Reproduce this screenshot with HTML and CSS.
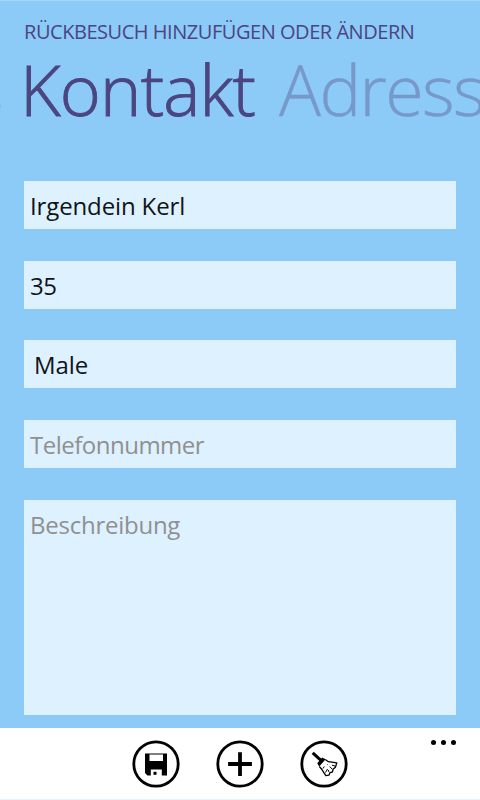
FILE: index.html
```html
<!DOCTYPE html>
<html lang="de">
<head>
<meta charset="utf-8">
<title>Rückbesuch</title>
<link rel="stylesheet" href="styles.css">
</head>
<body>
<main class="page">
  <h1 class="title">RÜCKBESUCH HINZUFÜGEN ODER ÄNDERN</h1>
  <nav class="pivot">
    <span class="previous">s</span>
    <span class="tab active">Kontakt</span>
    <span class="tab next">Adress</span>
  </nav>
  <form class="fields">
    <div class="field name">Irgendein Kerl</div>
    <div class="field age">35</div>
    <div class="field gender">Male</div>
    <div class="field hint phone">Telefonnummer</div>
    <div class="field hint notes">Beschreibung</div>
  </form>
</main>
<footer class="appbar">
  <div class="actions">
    <svg class="icon" viewBox="0 0 48 48"><circle class="ring" cx="24" cy="24" r="22.2"/><path fill-rule="evenodd" d="M13 13.5H35V35.5H15.5L13 33ZM17.5 14.5V21H31V14.5ZM18.8 29.5V35.5H29.8V29.5Z"/><path d="M21.5 31.8h3v3h-3z"/></svg>
    <svg class="icon" viewBox="0 0 48 48"><circle class="ring" cx="24" cy="24" r="22.2"/><path d="M22.1 12.2h3.8v9.9h10v3.8h-10v10h-3.8v-10h-10v-3.8h10z"/></svg>
    <svg class="icon" viewBox="0 0 48 48"><circle class="ring" cx="24" cy="24" r="22.2"/><path class="handle" d="M12.7 12.8l8 7.4"/><path d="M17.2 23.3l5-5.8 3.4 1.8-6.4 7.2z"/><path class="bristle" d="M25.3 19.4l3.1 2.3 8.4 1.2-1.4 4.3-2.4 2-.5 2.6-2.7 1.1-.9 2.3-3.1.4-4.5-6.9-2-2.2"/><path class="bristle thin" d="M23 28.5l1.3-2M25.5 32.5l2-3.5M29 32l-.8-2M32 29l-2.3-2.5M32 25.2l3 .8M27.5 24.5l.5-.5"/></svg>
  </div>
  <div class="more"><i></i><i></i><i></i></div>
</footer>
</body>
</html>
```
FILE: styles.css
```css
* { box-sizing: border-box; }
body {
  margin: 0;
  width: 480px;
  height: 800px;
  overflow: hidden;
  display: flex;
  flex-direction: column;
  background: #8ccaf7;
  font-family: "Open Sans", "Noto Sans", sans-serif;
}
.page {
  height: 728px;
  padding: 19px 24px 0;
  border-top: 1px solid #a5d6fa;
}
.title {
  margin: 0;
  height: 24px;
  font-size: 20px;
  line-height: 24px;
  font-weight: 400;
  letter-spacing: -0.46px;
  color: #4b4580;
  white-space: nowrap;
}
.pivot {
  position: relative;
  display: flex;
  height: 90px;
  line-height: 90px;
  font-size: 70px;
  white-space: nowrap;
  color: #4b4580;
}
.previous { position: absolute; left: -53px; color: #7799c9; font-weight: 300; }
.tab { flex: none; font-weight: 300; letter-spacing: -1px; }
.active { width: 259px; margin-left: -4px; letter-spacing: -0.8px; -webkit-text-stroke: 0.9px #4b4580; }
.next { width: 201px; letter-spacing: -1.6px; color: #7799c9; -webkit-text-stroke: 0.4px #7799c9; }
.fields { display: flex; flex-direction: column; margin-top: 47px; }
.field {
  height: 48px;
  margin-bottom: 32px;
  padding-left: 6px;
  background: #def1ff;
  font-size: 24px;
  line-height: 50px;
  letter-spacing: -0.5px;
  color: #111417;
  white-space: nowrap;
}
.name { letter-spacing: -0.13px; }
.age { margin-bottom: 31px; }
.gender { padding-left: 10px; letter-spacing: -0.1px; }
.hint { color: #909090; }
.notes { height: 215px; margin: 0; letter-spacing: -0.25px; }
.appbar {
  position: relative;
  height: 72px;
  padding-top: 12px;
  background: #fff;
  border-bottom: 1px solid #e6f2fb;
}
.actions { display: flex; justify-content: center; gap: 36px; }
.icon { width: 48px; height: 48px; display: block; }
.ring { fill: none; stroke: #000; stroke-width: 2.8; }
.handle { fill: none; stroke: #000; stroke-width: 3; }
.bristle { fill: none; stroke: #000; stroke-width: 1.3; stroke-linejoin: round; }
.thin { stroke-width: 1; }
.more { position: absolute; top: 12px; right: 24px; display: flex; gap: 5px; }
.more i { width: 5px; height: 5px; border-radius: 50%; background: #000; }
```
